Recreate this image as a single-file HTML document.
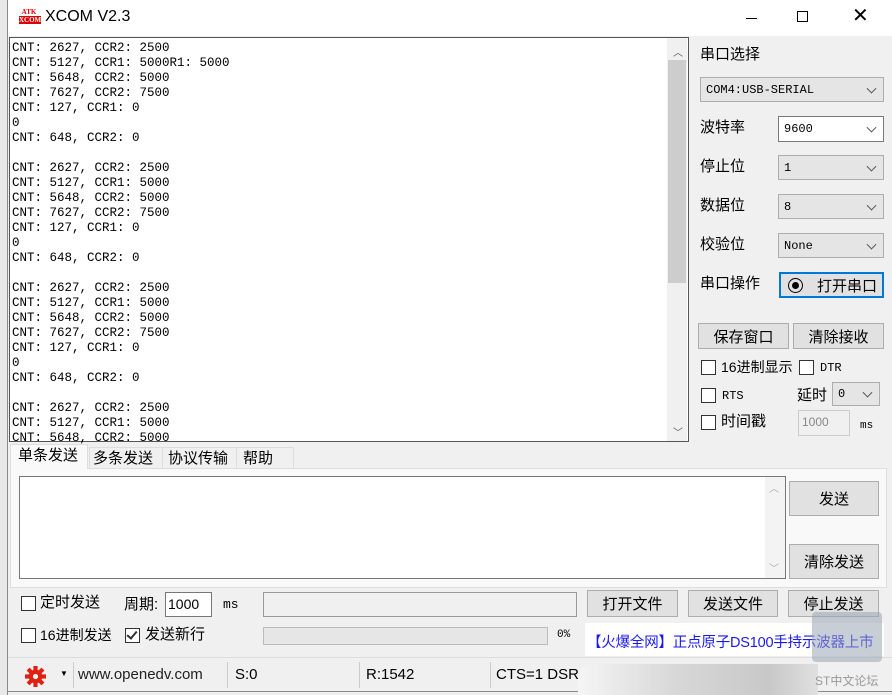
<!DOCTYPE html>
<html><head><meta charset="utf-8"><style>
*{box-sizing:border-box;margin:0;padding:0}
body{width:892px;height:695px;overflow:hidden;background:#f0f0f0;font-family:"Liberation Sans","Noto Sans CJK SC",sans-serif;font-size:14px;color:#000;position:relative}
.a{position:absolute}
.mono{font-family:"Liberation Mono","Noto Sans CJK SC",monospace}
.combo{position:absolute;background:#e5e5e5;border:1px solid #adadad;font-family:"Liberation Mono",monospace;font-size:12px;padding:0 0 0 5px;display:flex;align-items:center}
.combo:after{content:"";position:absolute;right:8px;top:50%;width:6px;height:6px;border-right:1px solid #555;border-bottom:1px solid #555;transform:translateY(-70%) rotate(45deg)}
.btn{position:absolute;background:#e1e1e1;border:1px solid #adadad;display:flex;align-items:center;justify-content:center;font-size:15px}
.cb{position:absolute;width:15px;height:15px;border:1px solid #333;background:#fff}
.lbl{position:absolute;font-size:15px;line-height:18px}
.sep{position:absolute;top:662px;width:1px;height:26px;background:#ccc}
</style></head><body>
<div class="a" style="left:0;top:0;width:8px;height:695px;background:#e8e8e8;border-right:1px solid #888"></div>
<div class="a" style="left:8px;top:0;width:884px;height:36px;background:#fff"></div>
<div class="a" style="left:19px;top:8px;width:20px;height:18px;font:bold 7px 'Liberation Serif',serif;color:#d00;line-height:8px;text-align:center">ATK<br><span style="background:#d00;color:#fff">XCOM</span></div>
<div class="a" style="left:45px;top:8px;font-size:16px">XCOM V2.3</div>
<div class="a" style="left:746px;top:18px;width:11px;height:1px;background:#000"></div>
<div class="a" style="left:797px;top:11px;width:11px;height:11px;border:1px solid #000"></div>
<div class="a" style="left:852px;top:3px;font-size:20px;font-weight:300">✕</div>

<div class="a" style="left:9px;top:37px;width:680px;height:405px;background:#fff;border:1px solid #555"></div>
<div class="a mono" style="left:12px;top:41px;font-size:12.5px;line-height:15px;white-space:pre">CNT: 2627, CCR2: 2500
CNT: 5127, CCR1: 5000R1: 5000
CNT: 5648, CCR2: 5000
CNT: 7627, CCR2: 7500
CNT: 127, CCR1: 0
0
CNT: 648, CCR2: 0

CNT: 2627, CCR2: 2500
CNT: 5127, CCR1: 5000
CNT: 5648, CCR2: 5000
CNT: 7627, CCR2: 7500
CNT: 127, CCR1: 0
0
CNT: 648, CCR2: 0

CNT: 2627, CCR2: 2500
CNT: 5127, CCR1: 5000
CNT: 5648, CCR2: 5000
CNT: 7627, CCR2: 7500
CNT: 127, CCR1: 0
0
CNT: 648, CCR2: 0

CNT: 2627, CCR2: 2500
CNT: 5127, CCR1: 5000
CNT: 5648, CCR2: 5000</div>
<div class="a" style="left:667px;top:38px;width:20px;height:403px;background:#f0f0f0"></div>
<div class="a" style="left:668px;top:60px;width:18px;height:223px;background:#cdcdcd"></div>
<div class="a" style="left:673px;top:44px;font-size:10px;color:#555">︿</div>
<div class="a" style="left:673px;top:424px;font-size:10px;color:#555">﹀</div>

<div class="lbl" style="left:700px;top:46px">串口选择</div>
<div class="combo" style="left:700px;top:77px;width:184px;height:25px">COM4:USB-SERIAL</div>
<div class="lbl" style="left:700px;top:119px">波特率</div>
<div class="combo" style="left:778px;top:116px;width:106px;height:26px;background:#fff;border-color:#7a7a7a">9600</div>
<div class="lbl" style="left:700px;top:158px">停止位</div>
<div class="combo" style="left:778px;top:155px;width:106px;height:25px">1</div>
<div class="lbl" style="left:700px;top:197px">数据位</div>
<div class="combo" style="left:778px;top:194px;width:106px;height:25px">8</div>
<div class="lbl" style="left:700px;top:236px">校验位</div>
<div class="combo" style="left:778px;top:233px;width:106px;height:25px">None</div>
<div class="lbl" style="left:700px;top:275px">串口操作</div>
<div class="btn" style="left:779px;top:272px;width:105px;height:26px;border:2px solid #0078d7;justify-content:flex-start;padding-left:7px"><span style="display:inline-block;width:15px;height:15px;border-radius:50%;border:1px solid #000;position:relative;margin-right:14px"><span style="position:absolute;left:3px;top:3px;width:7px;height:7px;border-radius:50%;background:#000"></span></span>打开串口</div>
<div class="btn" style="left:698px;top:323px;width:91px;height:26px">保存窗口</div>
<div class="btn" style="left:793px;top:323px;width:91px;height:26px">清除接收</div>
<div class="cb" style="left:701px;top:360px"></div><div class="lbl" style="left:721px;top:358px;font-size:14px">16进制显示</div>
<div class="cb" style="left:799px;top:360px"></div><div class="lbl mono" style="left:820px;top:359px;font-size:12px">DTR</div>
<div class="cb" style="left:701px;top:388px"></div><div class="lbl mono" style="left:722px;top:387px;font-size:12px">RTS</div>
<div class="lbl" style="left:797px;top:387px">延时</div>
<div class="combo" style="left:832px;top:382px;width:48px;height:24px">0</div>
<div class="cb" style="left:701px;top:415px"></div><div class="lbl" style="left:721px;top:413px">时间戳</div>
<div class="a" style="left:798px;top:410px;width:52px;height:26px;border:1px solid #ccc;font-size:12px;color:#888;padding:4px 3px">1000</div>
<div class="a mono" style="left:860px;top:420px;font-size:11px">ms</div>

<div class="a" style="left:10px;top:468px;width:877px;height:120px;background:#f9f9f9;border:1px solid #ddd"></div>
<div class="a" style="left:10px;top:444px;width:78px;height:25px;background:#f9f9f9;border:1px solid #ddd;border-bottom:none"></div>
<div class="lbl" style="left:18px;top:447px">单条发送</div>
<div class="a" style="left:89px;top:447px;width:205px;height:21px;border:1px solid #ddd;border-bottom:none"></div>
<div class="lbl" style="left:93px;top:450px">多条发送</div>
<div class="lbl" style="left:168px;top:450px">协议传输</div>
<div class="lbl" style="left:243px;top:450px">帮助</div>
<div class="a" style="left:162px;top:448px;width:1px;height:20px;background:#ddd"></div>
<div class="a" style="left:236px;top:448px;width:1px;height:20px;background:#ddd"></div>
<div class="a" style="left:19px;top:476px;width:767px;height:103px;background:#fff;border:1px solid #777"></div>
<div class="a" style="left:765px;top:477px;width:20px;height:101px;background:#f3f3f3"></div>
<div class="a" style="left:769px;top:480px;font-size:10px;color:#aaa">︿</div>
<div class="a" style="left:769px;top:560px;font-size:10px;color:#aaa">﹀</div>
<div class="btn" style="left:789px;top:481px;width:90px;height:35px">发送</div>
<div class="btn" style="left:789px;top:544px;width:90px;height:35px">清除发送</div>

<div class="cb" style="left:21px;top:596px"></div><div class="lbl" style="left:40px;top:594px">定时发送</div>
<div class="lbl" style="left:124px;top:596px">周期:</div>
<div class="a" style="left:165px;top:592px;width:47px;height:25px;background:#fff;border:1px solid #777;font-size:14px;padding:3px 2px">1000</div>
<div class="a mono" style="left:223px;top:597px;font-size:13px">ms</div>
<div class="a" style="left:263px;top:592px;width:314px;height:25px;background:#f0f0f0;border:1px solid #999"></div>
<div class="btn" style="left:587px;top:590px;width:91px;height:27px">打开文件</div>
<div class="btn" style="left:688px;top:590px;width:90px;height:27px">发送文件</div>
<div class="btn" style="left:788px;top:590px;width:91px;height:27px">停止发送</div>
<div class="cb" style="left:21px;top:628px"></div><div class="lbl" style="left:40px;top:626px;font-size:14px">16进制发送</div>
<div class="cb" style="left:125px;top:628px;background:#fff"><span style="position:absolute;left:3px;top:0px;width:6px;height:10px;border-right:2px solid #333;border-bottom:2px solid #333;transform:rotate(40deg)"></span></div>
<div class="lbl" style="left:145px;top:626px">发送新行</div>
<div class="a" style="left:263px;top:627px;width:285px;height:18px;background:#e6e6e6;border:1px solid #bbb"></div>
<div class="a mono" style="left:557px;top:629px;font-size:11px">0%</div>
<div class="a" style="left:585px;top:623px;width:299px;height:33px;background:#fff"></div>
<div class="a" style="left:587px;top:631px;font-size:14.5px;color:#1a1aee;white-space:nowrap;letter-spacing:-0.2px">【火爆全网】正点原子DS100手持示波器上市</div>

<div class="a" style="left:8px;top:657px;width:884px;height:35px;background:#f0f0f0;border-top:1px solid #ddd;border-bottom:1px solid #888"></div>
<svg class="a" style="left:25px;top:666px" width="21" height="21" viewBox="0 0 20 20"><g fill="#e02010"><circle cx="10" cy="10" r="6.5"/><rect x="8" y="0" width="4" height="20"/><rect x="0" y="8" width="20" height="4"/><rect x="8" y="0" width="4" height="20" transform="rotate(45 10 10)"/><rect x="8" y="0" width="4" height="20" transform="rotate(-45 10 10)"/></g><circle cx="10" cy="10" r="2.5" fill="#f0f0f0"/></svg>
<div class="a" style="left:60px;top:669px;font-size:8px">▼</div>
<div class="sep" style="left:73px"></div>
<div class="a" style="left:78px;top:666px;font-size:15px;color:#222">www.openedv.com</div>
<div class="sep" style="left:227px"></div>
<div class="a" style="left:235px;top:666px;font-size:15px">S:0</div>
<div class="sep" style="left:359px"></div>
<div class="a" style="left:366px;top:666px;font-size:15px">R:1542</div>
<div class="sep" style="left:490px"></div>
<div class="a" style="left:496px;top:666px;font-size:15px;white-space:nowrap">CTS=1 DSR</div>
<div class="a" style="left:578px;top:664px;width:240px;height:31px;background:linear-gradient(90deg,#f5f5f5,#d8d8d8 40%,#c8c8c8 80%,#e0e0e0);border-radius:14px 0 0 0"></div>
<div class="a" style="left:812px;top:612px;width:70px;height:50px;background:#9aa6b4;opacity:.55;border-radius:4px"></div>
<div class="a" style="left:815px;top:672px;font-size:12px;color:#999">ST中文论坛</div>
</body></html>
